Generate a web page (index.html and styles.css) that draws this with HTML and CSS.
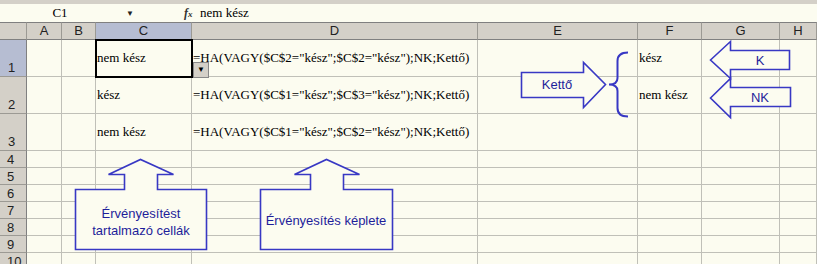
FILE: index.html
```html
<!DOCTYPE html>
<html lang="hu">
<head>
    <meta charset="UTF-8">
    <title>Érvényesítés</title>
    <link rel="stylesheet" href="styles.css">
</head>
<body>
    <!-- Formula bar -->
    <div class="formula-bar">
        <div class="name-box">C1</div>
        <div class="name-drop">&#9660;</div>
        <div class="fx">f<span>x</span></div>
        <div class="formula-text">nem kész</div>
    </div>

    <!-- Sheet -->
    <div class="sheet">
        <div class="hdr corner"></div>
        <div class="hdr">A</div>
        <div class="hdr">B</div>
        <div class="hdr sel">C</div>
        <div class="hdr">D</div>
        <div class="hdr">E</div>
        <div class="hdr">F</div>
        <div class="hdr">G</div>
        <div class="hdr">H</div>

        <div class="rh sel">1</div>
        <div class="cell"></div><div class="cell"></div>
        <div class="cell active">nem kész<div class="drop-btn">&#9660;</div></div>
        <div class="cell">=HA(VAGY($C$2="kész";$C$2="kész");NK;Kettő)</div>
        <div class="cell"></div>
        <div class="cell">kész</div>
        <div class="cell"></div><div class="cell"></div>

        <div class="rh">2</div>
        <div class="cell"></div><div class="cell"></div>
        <div class="cell">kész</div>
        <div class="cell">=HA(VAGY($C$1="kész";$C$3="kész");NK;Kettő)</div>
        <div class="cell"></div>
        <div class="cell">nem kész</div>
        <div class="cell"></div><div class="cell"></div>

        <div class="rh">3</div>
        <div class="cell"></div><div class="cell"></div>
        <div class="cell">nem kész</div>
        <div class="cell">=HA(VAGY($C$1="kész";$C$2="kész");NK;Kettő)</div>
        <div class="cell"></div><div class="cell"></div><div class="cell"></div><div class="cell"></div>

        <div class="rh small">4</div>
        <div class="cell"></div><div class="cell"></div><div class="cell"></div><div class="cell"></div><div class="cell"></div><div class="cell"></div><div class="cell"></div><div class="cell"></div>
        <div class="rh small">5</div>
        <div class="cell"></div><div class="cell"></div><div class="cell"></div><div class="cell"></div><div class="cell"></div><div class="cell"></div><div class="cell"></div><div class="cell"></div>
        <div class="rh small">6</div>
        <div class="cell"></div><div class="cell"></div><div class="cell"></div><div class="cell"></div><div class="cell"></div><div class="cell"></div><div class="cell"></div><div class="cell"></div>
        <div class="rh small">7</div>
        <div class="cell"></div><div class="cell"></div><div class="cell"></div><div class="cell"></div><div class="cell"></div><div class="cell"></div><div class="cell"></div><div class="cell"></div>
        <div class="rh small">8</div>
        <div class="cell"></div><div class="cell"></div><div class="cell"></div><div class="cell"></div><div class="cell"></div><div class="cell"></div><div class="cell"></div><div class="cell"></div>
        <div class="rh small">9</div>
        <div class="cell"></div><div class="cell"></div><div class="cell"></div><div class="cell"></div><div class="cell"></div><div class="cell"></div><div class="cell"></div><div class="cell"></div>
        <div class="rh small">10</div>
        <div class="cell"></div><div class="cell"></div><div class="cell"></div><div class="cell"></div><div class="cell"></div><div class="cell"></div><div class="cell"></div><div class="cell"></div>
    </div>

    <!-- Drawing objects over the sheet -->
    <svg class="shapes" width="817" height="264" viewBox="0 0 817 264">
        <g class="shape">
            <path d="M521.5 72.5 H583.5 V62.5 L605.5 84.5 L583.5 107.5 V97.5 H521.5 Z"/>
            <path class="brace" d="M628 52.5 Q617.5 52.5 617.5 61 V78 Q617.5 84.5 609 84.5 Q617.5 84.5 617.5 91 V108 Q617.5 116.5 628 116.5"/>
            <path d="M710.5 60 L730.5 41.5 V50.5 H789.5 V69.5 H730.5 V78.5 Z"/>
            <path d="M710.5 98 L730.5 78.5 V87.5 H790.5 V106.5 H730.5 V117.5 Z"/>
            <path d="M75.5 189.5 H124.5 V174.5 H108.5 L140.5 159.5 L173.5 174.5 H157.5 V189.5 H206.5 V249.5 H75.5 Z"/>
            <path d="M260.5 189.5 H310.5 V174.5 H294.5 L326.5 159.5 L359.5 174.5 H343.5 V189.5 H392.5 V249.5 H260.5 Z"/>
        </g>
        <g class="shape-text">
            <text x="557" y="89">Kettő</text>
            <text x="760" y="65">K</text>
            <text x="760" y="102">NK</text>
            <text x="141" y="218">Érvényesítést</text>
            <text x="141" y="235">tartalmazó cellák</text>
            <text x="326" y="225">Érvényesítés képlete</text>
        </g>
    </svg>
</body>
</html>
```

FILE: styles.css
```css
body { margin: 0; background: #fcfcf0; font-family: "Liberation Serif", "Times New Roman", serif; overflow: hidden; }

/* Formula bar */
.formula-bar { display: flex; align-items: center; height: 18px; border-top: 4px solid #d4d0c8; background: #fcfcf0; font-size: 13px; }
.name-box { width: 120px; text-align: center; }
.name-drop { width: 20px; font-size: 8px; color: #222; text-align: center; }
.fx { margin-left: 44px; width: 16px; font-style: italic; font-weight: bold; font-size: 12px; color: #333; }
.fx span { font-size: 9px; }

/* Sheet grid */
.sheet { display: grid; grid-template-columns: 27px 35px 34px 96px 286px 160px 64px 78px 1fr; grid-template-rows: 18px 37px 37px 37px; grid-auto-rows: 17px; }
.hdr { background: #d4d0c8; border-right: 1px solid #9c9a94; border-bottom: 1px solid #808080; border-top: 1px solid #808080; font-family: "Liberation Sans", Arial, sans-serif; font-size: 13px; color: #222; text-align: center; line-height: 16px; box-sizing: border-box; }
.hdr.sel { background: #b6bdd2; }
.rh { background: #d4d0c8; border-right: 1px solid #808080; border-bottom: 1px solid #9c9a94; font-family: "Liberation Sans", Arial, sans-serif; font-size: 13px; color: #222; display: flex; align-items: flex-end; padding-left: 8px; padding-bottom: 1px; box-sizing: border-box; line-height: 14px; }
.rh.small { padding-left: 7px; padding-bottom: 0; }
.rh.sel { background: #b6bdd2; }
.cell { border-right: 1px solid #c0c0b8; border-bottom: 1px solid #c0c0b8; font-size: 13px; color: #000; display: flex; align-items: center; padding-left: 1px; white-space: nowrap; box-sizing: border-box; position: relative; }
.cell.active { outline: 2px solid #000; outline-offset: -1px; z-index: 1; }
.drop-btn { position: absolute; left: 97px; top: 22px; width: 14px; height: 14px; background: #d4d0c8; border: 1px solid #888; font-size: 8px; line-height: 14px; text-align: center; color: #000; }

/* Drawing layer */
.shapes { position: absolute; left: 0; top: 0; }
.shape path { fill: #fcfcf0; stroke: #3838c4; stroke-width: 1.6; }
.shape .brace { fill: none; stroke-width: 2; }
.shape-text text { font-family: "Liberation Sans", Arial, sans-serif; font-size: 13px; fill: #1e1e9a; text-anchor: middle; }
```
